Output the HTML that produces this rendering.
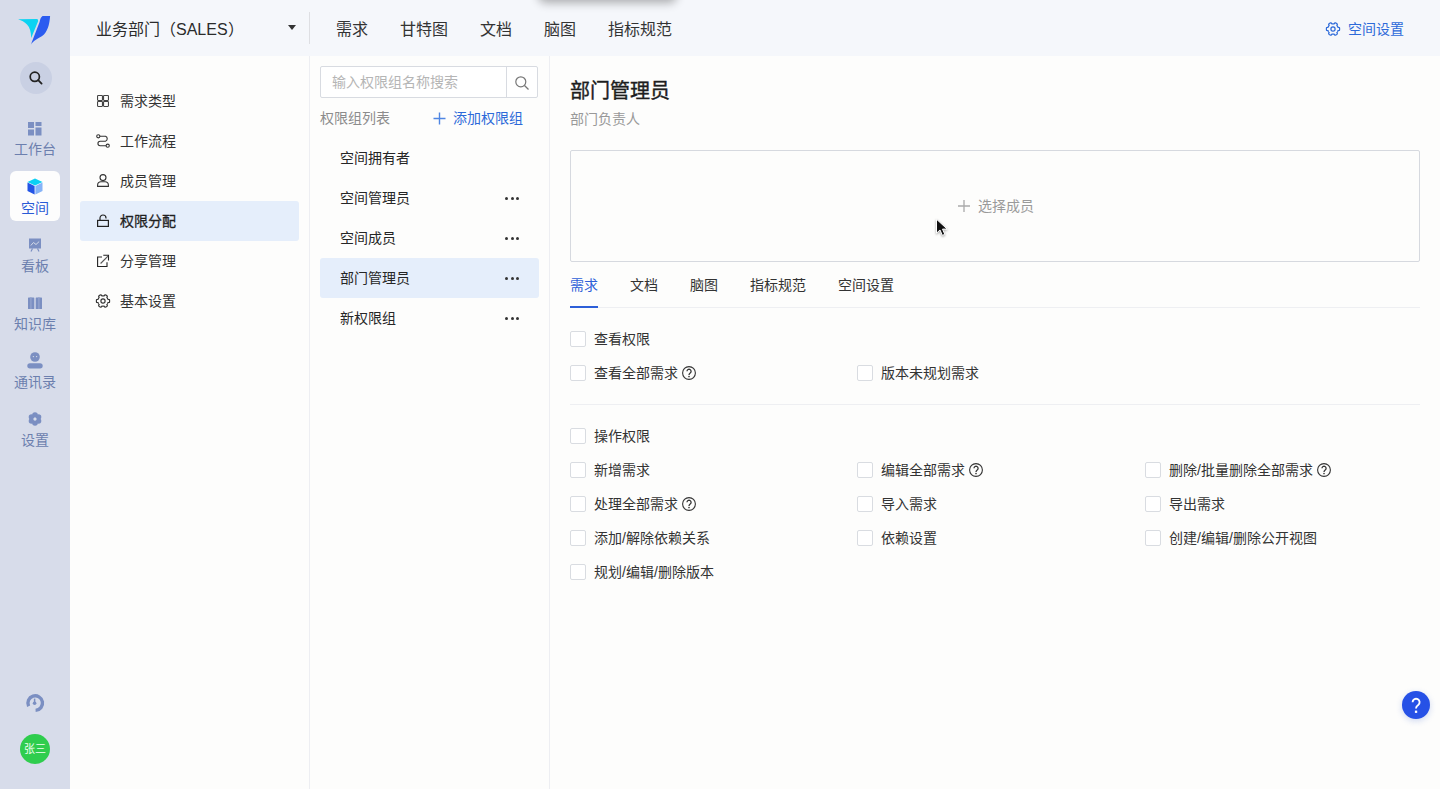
<!DOCTYPE html>
<html lang="zh-CN"><head><meta charset="utf-8">
<style>
*{margin:0;padding:0;box-sizing:border-box}
html,body{width:1440px;height:789px;overflow:hidden;background:#fdfdfc;font-family:"Liberation Sans",sans-serif;color:#333}
#side{position:absolute;left:0;top:0;width:70px;height:789px;background:#d7dcea}
#top{position:absolute;left:70px;top:0;width:1370px;height:56px;background:#f5f7fb}
.vl{position:absolute;width:1px;background:#edeef2}
.t{position:absolute;white-space:nowrap;line-height:14px;font-size:14px}
.t16{font-size:16px;line-height:16px}
.sn{color:#6c7fae;text-align:center;width:70px;left:0}
.med{font-weight:500}
.cb{position:absolute;width:16px;height:16px;border:1px solid #d9dce1;border-radius:2px;background:#fff}
.q{position:absolute;width:14px;height:14px;border:1.2px solid #333;border-radius:50%;font-size:10px;line-height:12px;text-align:center;color:#333}
.dots{position:absolute;width:14px;height:3px}
.dots i{position:absolute;top:0;width:3px;height:3px;border-radius:50%;background:#333}
.hl{position:absolute;background:#e5eefb;border-radius:3px}
svg{position:absolute;overflow:visible}
</style></head><body>
<div id="side"></div>
<div id="top"></div>

<!-- logo -->
<svg style="left:0;top:0" width="70" height="56" viewBox="0 0 70 56">
  <path d="M18.1 19.2 L36.6 19.1 Q38.6 19.2 38.1 21.2 L31.2 38 C31 32 30 27.5 27 24.5 C24.5 22 21.5 20.3 18.1 19.2 Z" fill="#0bd3f2"/>
  <path d="M30.9 44.4 L39.6 22 C40.3 19.5 40.5 17.5 42.5 16.1 L50.1 16.1 C49.6 22.5 48.6 29.5 44 34.5 C41 37.2 38 38.2 35.5 39.9 C33.5 41.2 32 42.8 30.9 44.4 Z" fill="#2b5cf0"/>
</svg>

<!-- search circle -->
<div style="position:absolute;left:20px;top:62px;width:32px;height:32px;border-radius:50%;background:#c9d0e3"></div>
<svg style="left:28px;top:70px" width="16" height="16" viewBox="0 0 16 16"><circle cx="6.8" cy="6.8" r="4.6" fill="none" stroke="#222" stroke-width="1.7"/><path d="M10.2 10.2 L13.6 13.6" stroke="#222" stroke-width="1.8" stroke-linecap="round"/></svg>

<!-- 工作台 -->
<svg style="left:28px;top:122px" width="14" height="14" viewBox="0 0 14 14" fill="#7b8fc2">
  <rect x="0" y="0" width="6" height="6"/><rect x="7.5" y="0" width="6" height="4"/><rect x="0" y="7.5" width="6" height="6"/><rect x="7.5" y="5.5" width="6" height="8"/>
</svg>
<div class="t sn" style="top:142px">工作台</div>

<!-- 空间 active -->
<div style="position:absolute;left:10px;top:171px;width:50px;height:50px;border-radius:6px;background:#fdfdfd"></div>
<svg style="left:27px;top:178px" width="16" height="17" viewBox="0 0 16 17">
  <path d="M8 0.5 L15.5 4 L8 7.5 L0.5 4 Z" fill="#0bd0f4"/>
  <path d="M0.5 4.6 L7.6 8.1 L7.6 16.5 L0.5 13 Z" fill="#2354e6"/>
  <path d="M15.5 4.6 L8.4 8.1 L8.4 16.5 L15.5 13 Z" fill="#86b3f7"/>
</svg>
<div class="t sn" style="top:201px;color:#2a5bd6">空间</div>

<!-- 看板 -->
<svg style="left:28px;top:238px" width="14" height="14" viewBox="0 0 14 14">
  <path d="M1 0.5 H13 V10.5 H1 Z" fill="#7b8fc2"/>
  <path d="M3 13.5 L4.5 10.5 M11 13.5 L9.5 10.5" stroke="#7b8fc2" stroke-width="1.2"/>
  <path d="M2.8 7.5 L5.5 4.5 L8 6.5 L11.2 3.5" fill="none" stroke="#d6dce9" stroke-width="1"/>
</svg>
<div class="t sn" style="top:259px">看板</div>

<!-- 知识库 -->
<svg style="left:28px;top:297px" width="14" height="12" viewBox="0 0 14 12" fill="#7b8fc2">
  <rect x="0" y="0.5" width="6.3" height="11.5" rx="0.6"/><rect x="7.7" y="0.5" width="6.3" height="11.5" rx="0.6"/>
  <rect x="2.3" y="0" width="1.2" height="12" fill="#97a6cf"/><rect x="10.3" y="0" width="1.2" height="12" fill="#97a6cf"/>
</svg>
<div class="t sn" style="top:317px">知识库</div>

<!-- 通讯录 -->
<svg style="left:27px;top:352px" width="16" height="17" viewBox="0 0 16 17" fill="#7b8fc2">
  <circle cx="8" cy="5" r="4.8"/>
  <rect x="0.3" y="11.2" width="15.4" height="5.3" rx="2.65"/>
  <circle cx="6.4" cy="4.6" r="0.7" fill="#d6dce9"/><circle cx="9.6" cy="4.6" r="0.7" fill="#d6dce9"/>
</svg>
<div class="t sn" style="top:375px">通讯录</div>

<!-- 设置 -->
<svg style="left:28px;top:412px" width="14" height="14" viewBox="0 0 14 14" fill="#7b8fc2">
  <circle cx="7" cy="3" r="2.8"/><circle cx="7" cy="11" r="2.8"/>
  <circle cx="3.5" cy="5" r="2.8"/><circle cx="10.5" cy="5" r="2.8"/>
  <circle cx="3.5" cy="9" r="2.8"/><circle cx="10.5" cy="9" r="2.8"/>
  <circle cx="7" cy="7" r="1.6" fill="#d6dce9"/>
</svg>
<div class="t sn" style="top:433px">设置</div>

<!-- bottom gauge -->
<svg style="left:26px;top:694px" width="18" height="18" viewBox="0 0 18 18">
  <path d="M2.6 12.2 A7.3 7.3 0 1 1 9.6 16.4" fill="none" stroke="#7b8fc2" stroke-width="3.4"/>
  <path d="M8.6 4.6 V8.5" stroke="#7b8fc2" stroke-width="1.5"/>
  <circle cx="8.6" cy="9.3" r="1.8" fill="#7b8fc2"/>
</svg>
<!-- avatar -->
<div style="position:absolute;left:20px;top:734px;width:30px;height:30px;border-radius:50%;background:#2fcd4e;color:#f1fff1;font-size:11px;line-height:30px;text-align:center">张三</div>

<!-- TOP BAR -->
<div class="t t16" style="left:96px;top:22px;color:#2b2b2b">业务部门（SALES）</div>
<svg style="left:288px;top:25px" width="8" height="5" viewBox="0 0 8 5"><path d="M0 0 H8 L4 5 Z" fill="#333"/></svg>
<div class="vl" style="left:309px;top:12px;height:32px;background:#dedfe3"></div>
<div class="t t16" style="left:336px;top:22px">需求</div>
<div class="t t16" style="left:400px;top:22px">甘特图</div>
<div class="t t16" style="left:480px;top:22px">文档</div>
<div class="t t16" style="left:544px;top:22px">脑图</div>
<div class="t t16" style="left:608px;top:22px">指标规范</div>
<!-- popup shadow at top -->
<div style="position:absolute;left:538px;top:-40px;width:139px;height:40px;border-radius:8px;background:#f5f7fb;box-shadow:0 3px 10px rgba(0,0,0,0.30)"></div>

<svg style="left:1326px;top:22px" width="14" height="14" viewBox="0 0 14 14" fill="none" stroke="#2d6ad9" stroke-width="1.2" stroke-linejoin="round">
  <path d="M13.60 7.00 L13.59 7.35 L13.56 7.69 L13.52 8.03 L13.45 8.37 L12.70 8.53 L11.95 8.61 L11.85 8.86 L11.75 9.12 L11.63 9.36 L11.50 9.60 L11.36 9.83 L11.21 10.06 L11.04 10.27 L10.87 10.48 L11.17 11.17 L11.41 11.90 L11.15 12.13 L10.88 12.34 L10.59 12.54 L10.30 12.72 L10.00 12.88 L9.68 13.03 L9.37 13.16 L9.04 13.27 L8.53 12.70 L8.08 12.09 L7.81 12.14 L7.54 12.17 L7.27 12.19 L7.00 12.20 L6.73 12.19 L6.46 12.17 L6.19 12.14 L5.92 12.09 L5.47 12.70 L4.96 13.27 L4.63 13.16 L4.32 13.03 L4.00 12.88 L3.70 12.72 L3.41 12.54 L3.12 12.34 L2.85 12.13 L2.59 11.90 L2.83 11.17 L3.13 10.48 L2.96 10.27 L2.79 10.06 L2.64 9.83 L2.50 9.60 L2.37 9.36 L2.25 9.12 L2.15 8.86 L2.05 8.61 L1.30 8.53 L0.55 8.37 L0.48 8.03 L0.44 7.69 L0.41 7.35 L0.40 7.00 L0.41 6.65 L0.44 6.31 L0.48 5.97 L0.55 5.63 L1.30 5.47 L2.05 5.39 L2.15 5.14 L2.25 4.88 L2.37 4.64 L2.50 4.40 L2.64 4.17 L2.79 3.94 L2.96 3.73 L3.13 3.52 L2.83 2.83 L2.59 2.10 L2.85 1.87 L3.12 1.66 L3.41 1.46 L3.70 1.28 L4.00 1.12 L4.32 0.97 L4.63 0.84 L4.96 0.73 L5.47 1.30 L5.92 1.91 L6.19 1.86 L6.46 1.83 L6.73 1.81 L7.00 1.80 L7.27 1.81 L7.54 1.83 L7.81 1.86 L8.08 1.91 L8.53 1.30 L9.04 0.73 L9.37 0.84 L9.68 0.97 L10.00 1.12 L10.30 1.28 L10.59 1.46 L10.88 1.66 L11.15 1.87 L11.41 2.10 L11.17 2.83 L10.87 3.52 L11.04 3.73 L11.21 3.94 L11.36 4.17 L11.50 4.40 L11.63 4.64 L11.75 4.88 L11.85 5.14 L11.95 5.39 L12.70 5.47 L13.45 5.63 L13.52 5.97 L13.56 6.31 L13.59 6.65Z"/>
  <circle cx="7" cy="7" r="2.1"/>
</svg>
<div class="t" style="left:1348px;top:22px;color:#2d6ad9">空间设置</div>

<!-- SUB NAV -->
<div class="vl" style="left:309px;top:56px;height:733px"></div>
<div class="vl" style="left:549px;top:56px;height:733px"></div>
<div class="hl" style="left:80px;top:201px;width:219px;height:40px"></div>

<svg style="left:97px;top:95px" width="12" height="12" viewBox="0 0 12 12" fill="none" stroke="#444" stroke-width="1.1">
  <rect x="0.55" y="0.55" width="4.9" height="4.9" rx="0.6"/><rect x="6.55" y="0.55" width="4.9" height="4.9" rx="0.6"/>
  <rect x="0.55" y="6.55" width="4.9" height="4.9" rx="0.6"/><rect x="6.55" y="6.55" width="4.9" height="4.9" rx="0.6"/>
</svg>
<div class="t" style="left:120px;top:94px">需求类型</div>

<svg style="left:96px;top:134px" width="14" height="14" viewBox="0 0 14 14" fill="none" stroke="#333" stroke-width="1.1">
  <circle cx="2.3" cy="2.3" r="1.6"/><circle cx="11.7" cy="11.7" r="1.6"/>
  <path d="M3.9 2.3 H9.5 A2.6 2.6 0 0 1 9.5 7.2 H4.2 A2.2 2.2 0 0 0 4.2 11.7 H10.1"/>
</svg>
<div class="t" style="left:120px;top:134px">工作流程</div>

<svg style="left:97px;top:174px" width="12" height="13" viewBox="0 0 12 13" fill="none" stroke="#333" stroke-width="1.1">
  <circle cx="6" cy="3.6" r="3"/><path d="M0.6 12.4 V11 A3.4 3.4 0 0 1 4 7.8 H8 A3.4 3.4 0 0 1 11.4 11 V12.4 Z"/>
</svg>
<div class="t" style="left:120px;top:174px">成员管理</div>

<svg style="left:97px;top:214px" width="12" height="13" viewBox="0 0 12 13" fill="none" stroke="#222" stroke-width="1.2">
  <path d="M3 6.2 V4 A3 3 0 0 1 9 4 V4.4"/><rect x="0.6" y="6.4" width="10.8" height="6"/>
</svg>
<div class="t med" style="left:120px;top:214px;color:#1f1f1f;-webkit-text-stroke:0.3px #1f1f1f">权限分配</div>

<svg style="left:96px;top:254px" width="14" height="14" viewBox="0 0 14 14" fill="none" stroke="#222" stroke-width="1.1">
  <path d="M6 3 H1.6 V12.5 H11 V8.3"/><path d="M7.3 1.3 H12.5 V6.5" /><path d="M4.6 9.5 L12 2.1" stroke="#555"/>
</svg>
<div class="t" style="left:120px;top:254px">分享管理</div>

<svg style="left:96px;top:294px" width="14" height="14" viewBox="0 0 14 14" fill="none" stroke="#333" stroke-width="1.15" stroke-linejoin="round">
  <path d="M13.60 7.00 L13.59 7.35 L13.56 7.69 L13.52 8.03 L13.45 8.37 L12.70 8.53 L11.95 8.61 L11.85 8.86 L11.75 9.12 L11.63 9.36 L11.50 9.60 L11.36 9.83 L11.21 10.06 L11.04 10.27 L10.87 10.48 L11.17 11.17 L11.41 11.90 L11.15 12.13 L10.88 12.34 L10.59 12.54 L10.30 12.72 L10.00 12.88 L9.68 13.03 L9.37 13.16 L9.04 13.27 L8.53 12.70 L8.08 12.09 L7.81 12.14 L7.54 12.17 L7.27 12.19 L7.00 12.20 L6.73 12.19 L6.46 12.17 L6.19 12.14 L5.92 12.09 L5.47 12.70 L4.96 13.27 L4.63 13.16 L4.32 13.03 L4.00 12.88 L3.70 12.72 L3.41 12.54 L3.12 12.34 L2.85 12.13 L2.59 11.90 L2.83 11.17 L3.13 10.48 L2.96 10.27 L2.79 10.06 L2.64 9.83 L2.50 9.60 L2.37 9.36 L2.25 9.12 L2.15 8.86 L2.05 8.61 L1.30 8.53 L0.55 8.37 L0.48 8.03 L0.44 7.69 L0.41 7.35 L0.40 7.00 L0.41 6.65 L0.44 6.31 L0.48 5.97 L0.55 5.63 L1.30 5.47 L2.05 5.39 L2.15 5.14 L2.25 4.88 L2.37 4.64 L2.50 4.40 L2.64 4.17 L2.79 3.94 L2.96 3.73 L3.13 3.52 L2.83 2.83 L2.59 2.10 L2.85 1.87 L3.12 1.66 L3.41 1.46 L3.70 1.28 L4.00 1.12 L4.32 0.97 L4.63 0.84 L4.96 0.73 L5.47 1.30 L5.92 1.91 L6.19 1.86 L6.46 1.83 L6.73 1.81 L7.00 1.80 L7.27 1.81 L7.54 1.83 L7.81 1.86 L8.08 1.91 L8.53 1.30 L9.04 0.73 L9.37 0.84 L9.68 0.97 L10.00 1.12 L10.30 1.28 L10.59 1.46 L10.88 1.66 L11.15 1.87 L11.41 2.10 L11.17 2.83 L10.87 3.52 L11.04 3.73 L11.21 3.94 L11.36 4.17 L11.50 4.40 L11.63 4.64 L11.75 4.88 L11.85 5.14 L11.95 5.39 L12.70 5.47 L13.45 5.63 L13.52 5.97 L13.56 6.31 L13.59 6.65Z"/>
  <circle cx="7" cy="7" r="2.1"/>
</svg>
<div class="t" style="left:120px;top:294px">基本设置</div>

<!-- MIDDLE -->
<div style="position:absolute;left:320px;top:66px;width:218px;height:32px;border:1px solid #d8dbe1;border-radius:2px;background:#fff"></div>
<div class="vl" style="left:506px;top:67px;height:30px;background:#d8dbe1"></div>
<div class="t" style="left:332px;top:75px;color:#b5b5b5">输入权限组名称搜索</div>
<svg style="left:514px;top:75px" width="16" height="16" viewBox="0 0 16 16"><circle cx="6.8" cy="6.8" r="5" fill="none" stroke="#777" stroke-width="1.2"/><path d="M10.5 10.5 L14.5 14.5" stroke="#777" stroke-width="1.3"/></svg>
<div class="t" style="left:320px;top:111px;color:#8c8c8c">权限组列表</div>
<svg style="left:433px;top:112px" width="13" height="13" viewBox="0 0 13 13"><path d="M6.5 0.5 V12.5 M0.5 6.5 H12.5" stroke="#4f86e3" stroke-width="1.4"/></svg>
<div class="t" style="left:453px;top:111px;color:#2d6ad9">添加权限组</div>

<div class="hl" style="left:320px;top:258px;width:219px;height:40px"></div>
<div class="t med" style="left:340px;top:151px;color:#262626">空间拥有者</div>
<div class="t med" style="left:340px;top:191px;color:#262626">空间管理员</div>
<div class="t med" style="left:340px;top:231px;color:#262626">空间成员</div>
<div class="t med" style="left:340px;top:271px;color:#262626">部门管理员</div>
<div class="t med" style="left:340px;top:311px;color:#262626">新权限组</div>
<div class="dots" style="left:505px;top:197px"><i style="left:0"></i><i style="left:5.5px"></i><i style="left:11px"></i></div>
<div class="dots" style="left:505px;top:237px"><i style="left:0"></i><i style="left:5.5px"></i><i style="left:11px"></i></div>
<div class="dots" style="left:505px;top:277px"><i style="left:0"></i><i style="left:5.5px"></i><i style="left:11px"></i></div>
<div class="dots" style="left:505px;top:317px"><i style="left:0"></i><i style="left:5.5px"></i><i style="left:11px"></i></div>

<!-- RIGHT -->
<div class="t med" style="left:570px;top:81px;font-size:20px;line-height:20px;font-weight:500;color:#1e1e1e;-webkit-text-stroke:0.4px #1e1e1e">部门管理员</div>
<div class="t" style="left:570px;top:112px;color:#999">部门负责人</div>
<div style="position:absolute;left:570px;top:150px;width:850px;height:112px;border:1px solid #d6d9df;border-radius:2px;background:#fdfdfc"></div>
<svg style="left:958px;top:200px" width="12" height="12" viewBox="0 0 12 12"><path d="M6 0 V12 M0 6 H12" stroke="#aaa" stroke-width="1.3"/></svg>
<div class="t" style="left:978px;top:199px;color:#9a9a9a">选择成员</div>

<div style="position:absolute;left:570px;top:307px;width:850px;height:1px;background:#eeeff2"></div>
<div class="t" style="left:570px;top:278px;color:#2d5fd8">需求</div>
<div style="position:absolute;left:570px;top:306px;width:28px;height:2px;background:#2d5fd8"></div>
<div class="t" style="left:630px;top:278px">文档</div>
<div class="t" style="left:690px;top:278px">脑图</div>
<div class="t" style="left:750px;top:278px">指标规范</div>
<div class="t" style="left:838px;top:278px">空间设置</div>

<div class="cb" style="left:570px;top:331px"></div><div class="t" style="left:594px;top:332px">查看权限</div>
<div class="cb" style="left:570px;top:365px"></div><div class="t" style="left:594px;top:366px">查看全部需求</div><svg style="left:682px;top:366px" width="14" height="14" viewBox="0 0 14 14" fill="none" stroke="#333"><circle cx="7" cy="7" r="6.4" stroke-width="1.1"/><path d="M5 5.3 A2.05 2.05 0 1 1 8.2 7 C7.3 7.6 7 8 7 9" stroke-width="1.3"/><circle cx="7" cy="10.6" r="0.8" fill="#333" stroke="none"/></svg>
<div class="cb" style="left:857px;top:365px"></div><div class="t" style="left:881px;top:366px">版本未规划需求</div>
<div style="position:absolute;left:570px;top:404px;width:850px;height:1px;background:#eeeff2"></div>

<div class="cb" style="left:570px;top:428px"></div><div class="t" style="left:594px;top:429px">操作权限</div>
<div class="cb" style="left:570px;top:462px"></div><div class="t" style="left:594px;top:463px">新增需求</div>
<div class="cb" style="left:857px;top:462px"></div><div class="t" style="left:881px;top:463px">编辑全部需求</div><svg style="left:969px;top:463px" width="14" height="14" viewBox="0 0 14 14" fill="none" stroke="#333"><circle cx="7" cy="7" r="6.4" stroke-width="1.1"/><path d="M5 5.3 A2.05 2.05 0 1 1 8.2 7 C7.3 7.6 7 8 7 9" stroke-width="1.3"/><circle cx="7" cy="10.6" r="0.8" fill="#333" stroke="none"/></svg>
<div class="cb" style="left:1145px;top:462px"></div><div class="t" style="left:1169px;top:463px">删除/批量删除全部需求</div><svg style="left:1317px;top:463px" width="14" height="14" viewBox="0 0 14 14" fill="none" stroke="#333"><circle cx="7" cy="7" r="6.4" stroke-width="1.1"/><path d="M5 5.3 A2.05 2.05 0 1 1 8.2 7 C7.3 7.6 7 8 7 9" stroke-width="1.3"/><circle cx="7" cy="10.6" r="0.8" fill="#333" stroke="none"/></svg>
<div class="cb" style="left:570px;top:496px"></div><div class="t" style="left:594px;top:497px">处理全部需求</div><svg style="left:682px;top:497px" width="14" height="14" viewBox="0 0 14 14" fill="none" stroke="#333"><circle cx="7" cy="7" r="6.4" stroke-width="1.1"/><path d="M5 5.3 A2.05 2.05 0 1 1 8.2 7 C7.3 7.6 7 8 7 9" stroke-width="1.3"/><circle cx="7" cy="10.6" r="0.8" fill="#333" stroke="none"/></svg>
<div class="cb" style="left:857px;top:496px"></div><div class="t" style="left:881px;top:497px">导入需求</div>
<div class="cb" style="left:1145px;top:496px"></div><div class="t" style="left:1169px;top:497px">导出需求</div>
<div class="cb" style="left:570px;top:530px"></div><div class="t" style="left:594px;top:531px">添加/解除依赖关系</div>
<div class="cb" style="left:857px;top:530px"></div><div class="t" style="left:881px;top:531px">依赖设置</div>
<div class="cb" style="left:1145px;top:530px"></div><div class="t" style="left:1169px;top:531px">创建/编辑/删除公开视图</div>
<div class="cb" style="left:570px;top:564px"></div><div class="t" style="left:594px;top:565px">规划/编辑/删除版本</div>

<!-- cursor -->
<svg style="left:935px;top:218px" width="14" height="19" viewBox="0 0 14 19">
  <path d="M1.5 1.2 L1.5 15.2 L5 12 L7.4 17.4 L9.8 16.3 L7.5 11.1 L12.2 11.1 Z" fill="#111" stroke="#fff" stroke-width="1" stroke-linejoin="round" style="filter:drop-shadow(0 1px 1px rgba(0,0,0,.35))"/>
</svg>

<!-- help -->
<div style="position:absolute;left:1402px;top:691px;width:28px;height:28px;border-radius:50%;background:#2651e6;box-shadow:0 2px 6px rgba(40,80,200,0.22)"></div>
<svg style="left:1402px;top:691px" width="28" height="28" viewBox="0 0 28 28" fill="none">
  <path d="M10.6 11.2 A3.5 3.5 0 1 1 16.2 14 C14.6 15 14 15.6 14 17.6" stroke="#fff" stroke-width="1.9"/>
  <rect x="12.9" y="19.6" width="2.3" height="2.3" fill="#fff"/>
</svg>
</body></html>
